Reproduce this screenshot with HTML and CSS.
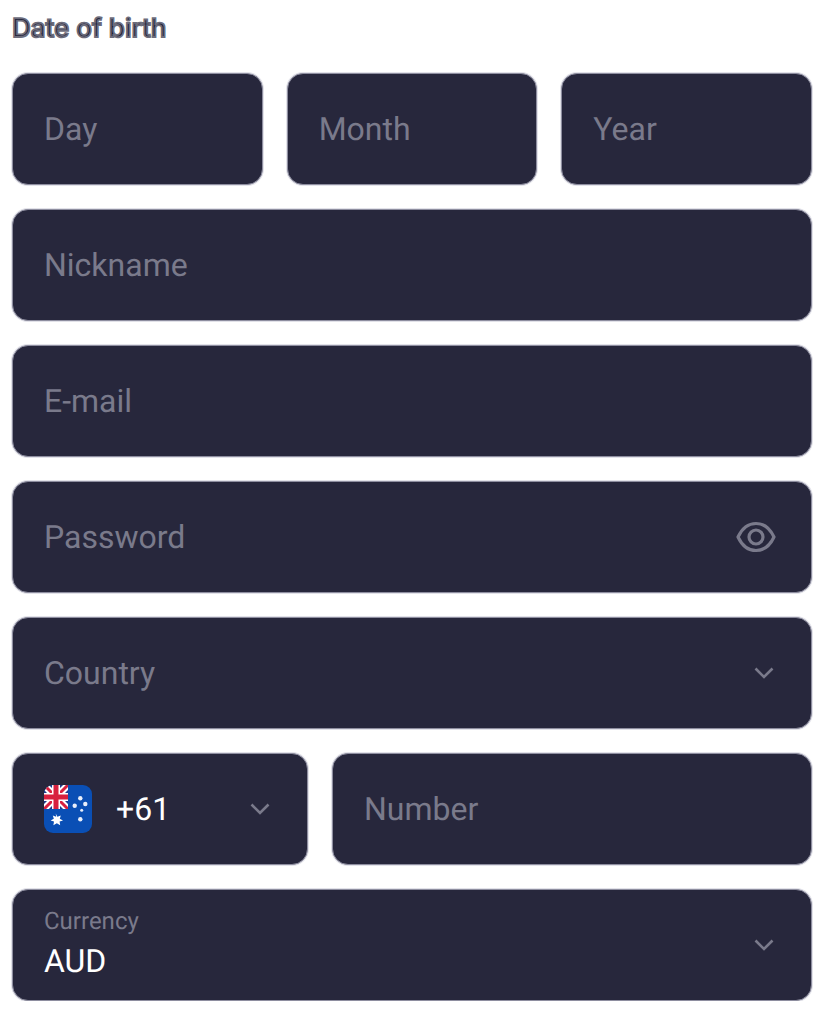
FILE: index.html
```html
<!DOCTYPE html>
<html lang="en">
  <head>
    <meta charset="UTF-8" />
    <meta name="viewport" content="width=device-width, initial-scale=1.0" />
    <title>Sign up</title>
    <link rel="stylesheet" href="styles.css">
  </head>

  <body>
    <form class="signup-form">
      <div class="form-label">Date of birth</div>

      <div class="row row-date">
        <div class="field"><span class="placeholder">Day</span></div>
        <div class="field"><span class="placeholder">Month</span></div>
        <div class="field"><span class="placeholder">Year</span></div>
      </div>

      <div class="field"><span class="placeholder">Nickname</span></div>
      <div class="field"><span class="placeholder">E-mail</span></div>

      <div class="field">
        <span class="placeholder">Password</span>
        <svg class="eye-icon" viewBox="0 0 40 32" fill="none" stroke="#7a7a8b" stroke-width="3.2">
          <path d="M2 16C6 7.500 12 2.500 20 2.500S34 7.500 38 16C34 24.500 28 29.500 20 29.500S6 24.500 2 16z" stroke-linejoin="round" />
          <circle cx="20" cy="16" r="7" />
        </svg>
      </div>

      <div class="field">
        <span class="placeholder">Country</span>
        <svg class="chevron" viewBox="0 0 20 12" fill="none" stroke="#7a7a8b" stroke-width="2.6">
          <path d="M1.5 1.500L10 10l8.500-8.500" />
        </svg>
      </div>

      <div class="row row-phone">
        <div class="field field-code">
          <svg class="flag" viewBox="0 0 48 48">
            <defs>
              <clipPath id="flagClip"><rect width="48" height="48" rx="9" /></clipPath>
              <clipPath id="jackClip"><rect width="24" height="24" /></clipPath>
            </defs>
            <g clip-path="url(#flagClip)">
              <rect width="48" height="48" fill="#0a4fb5" />
              <g clip-path="url(#jackClip)">
                <rect width="24" height="24" fill="#1f3a8a" />
                <path d="M0 0L24 24M24 0L0 24" stroke="#fff" stroke-width="7" />
                <path d="M0 0L24 24M24 0L0 24" stroke="#d8213f" stroke-width="3" />
                <path d="M12 0V24M0 12H24" stroke="#fff" stroke-width="8" />
                <path d="M12 0V24M0 12H24" stroke="#d8213f" stroke-width="5" />
              </g>
              <path d="M11.700 28.500l1.700 3.200 3.400-1.300-1 3.400 3.200 1.800-3.400 1 .6 3.600-3.400-1.900-3.400 1.900.6-3.600-3.400-1 3.200-1.800-1-3.400 3.400 1.300z" fill="#fff" />
              <circle cx="36.300" cy="13.300" r="2.200" fill="#e8eefa" />
              <circle cx="41.300" cy="19" r="2.200" fill="#e8eefa" />
              <circle cx="30.700" cy="20.700" r="2.200" fill="#e8eefa" />
              <circle cx="37.700" cy="25.300" r="1.500" fill="#e8eefa" />
              <circle cx="36.300" cy="34.300" r="2.200" fill="#e8eefa" />
            </g>
          </svg>
          <span class="value">+61</span>
          <svg class="chevron" viewBox="0 0 20 12" fill="none" stroke="#7a7a8b" stroke-width="2.6">
            <path d="M1.5 1.500L10 10l8.500-8.500" />
          </svg>
        </div>
        <div class="field"><span class="placeholder">Number</span></div>
      </div>

      <div class="field">
        <div class="stacked">
          <span class="small-label">Currency</span>
          <span class="value">AUD</span>
        </div>
        <svg class="chevron" viewBox="0 0 20 12" fill="none" stroke="#7a7a8b" stroke-width="2.6">
          <path d="M1.5 1.500L10 10l8.500-8.500" />
        </svg>
      </div>
    </form>
  </body>
</html>
```

FILE: styles.css
```css
* {
  margin: 0;
  padding: 0;
  box-sizing: border-box;
}

body {
  font-family: "Roboto", "Liberation Sans", sans-serif;
  background-color: #fff;
  text-rendering: geometricPrecision;
}

.signup-form {
  display: flex;
  flex-direction: column;
  gap: 24px;
  padding: 12px 14px 0 12px;
}

.form-label {
  height: 37px;
  padding-top: 1px;
  font-family: "Inter", "Roboto", sans-serif;
  font-size: 26px;
  font-weight: 500;
  line-height: 32px;
  color: #1a1a32;
  -webkit-text-stroke: 1.8px #6c6c7b;
}

.row {
  display: grid;
  gap: 24px;
}

.row-date {
  grid-template-columns: repeat(3, 1fr);
}

.row-phone {
  grid-template-columns: 296px 1fr;
}

.field {
  display: flex;
  align-items: center;
  justify-content: space-between;
  height: 112px;
  padding: 0 32px 0 31px;
  background-color: #27273c;
  border: 1px solid #8e8ea0;
  border-radius: 16px;
  box-shadow: 0 0 0 1px #e2e2e9;
}

.placeholder {
  font-size: 32px;
  color: #7a7a8b;
}

.value {
  font-size: 32px;
  color: #fff;
}

.small-label {
  font-size: 24px;
  line-height: 30px;
  color: #7a7a8b;
}

.stacked {
  display: flex;
  flex-direction: column;
  gap: 6px;
  padding-bottom: 4px;
}

.stacked .value {
  line-height: 38px;
}

.eye-icon {
  width: 40px;
  height: 32px;
  margin-right: 3px;
}

.chevron {
  width: 20px;
  height: 12px;
  margin-right: 5px;
}

.field-code {
  justify-content: flex-start;
}

.flag {
  width: 48px;
  height: 48px;
  margin-right: 24px;
}

.field-code .chevron {
  margin-left: auto;
}
```
